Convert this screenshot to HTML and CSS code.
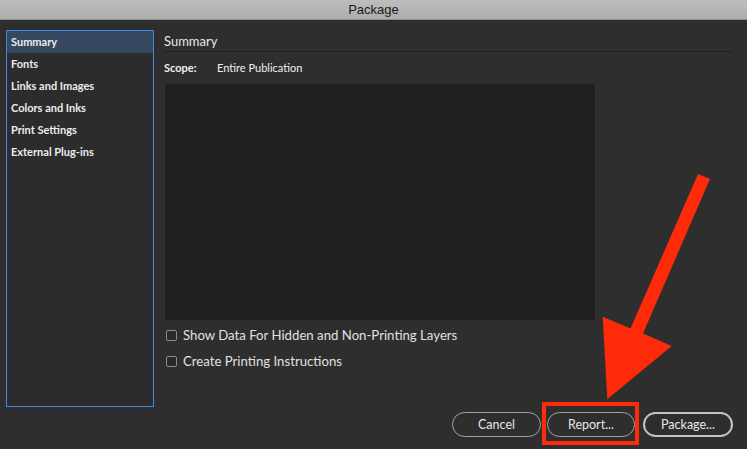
FILE: index.html
```html
<!DOCTYPE html>
<html lang="en">
<head>
<meta charset="utf-8">
<title>Package</title>
<link rel="stylesheet" href="styles.css">
</head>
<body>
<div class="window">
  <div class="titlebar">Package</div>
  <div class="main">
    <ul class="sidebar">
      <li class="item selected">Summary</li>
      <li class="item">Fonts</li>
      <li class="item">Links and Images</li>
      <li class="item">Colors and Inks</li>
      <li class="item">Print Settings</li>
      <li class="item">External Plug-ins</li>
    </ul>
    <section class="pane">
      <h1 class="pane-title">Summary</h1>
      <div class="scope"><span class="scope-label">Scope:</span><span>Entire Publication</span></div>
      <div class="info-box"></div>
      <label class="check"><span class="box"></span>Show Data For Hidden and Non-Printing Layers</label>
      <label class="check"><span class="box"></span>Create Printing Instructions</label>
    </section>
  </div>
  <div class="footer">
    <button class="btn btn-cancel">Cancel</button>
    <button class="btn btn-report">Report...</button>
    <button class="btn btn-default">Package...</button>
  </div>
  <svg class="annotation" width="747" height="449" viewBox="0 0 747 449">
    <polygon fill="#ff2a0a" points="698,174 710,179 643,333.5 671.7,346 607.3,399.3 602.7,316.7 630.5,328.5"/>
    <rect x="544" y="404" width="93" height="39" fill="none" stroke="#ff2a0a" stroke-width="4"/>
  </svg>
</div>
</body>
</html>
```
FILE: styles.css
```css
* { box-sizing: border-box; }
html, body { margin: 0; padding: 0; }
body {
  width: 747px;
  height: 449px;
  overflow: hidden;
  background: #2e2e2e;
  font-family: "Lato", "Open Sans", sans-serif;
  color: #e4e4e4;
}
.window {
  position: relative;
  width: 747px;
  height: 449px;
  display: flex;
  flex-direction: column;
}
.titlebar {
  height: 20px;
  background: linear-gradient(#bdbdbd, #adadad);
  border-bottom: 1px solid #8f8f8f;
  color: #1a1a1a;
  font-family: "Liberation Sans", sans-serif;
  font-size: 13px;
  line-height: 19px;
  text-align: center;
}
.main {
  display: flex;
  gap: 10px;
  padding: 10px 15px 0 6px;
  height: 387px;
}
.sidebar {
  list-style: none;
  margin: 0;
  padding: 0;
  width: 148px;
  height: 377px;
  border: 1px solid #3c8de0;
  background: #2c2c2c;
}
.item {
  height: 22px;
  line-height: 21px;
  padding-left: 4px;
  font-size: 11px;
  font-weight: 700;
  color: #ececec;
}
.item.selected {
  background: #34495f;
}
.pane {
  flex: 1;
  display: flex;
  flex-direction: column;
}
.pane-title {
  margin: 0;
  font-size: 13px;
  font-weight: 400;
  line-height: 20px;
  padding-top: 1px;
  height: 22px;
  border-bottom: 1px solid #212121;
  color: #e8e8e8;
}
.scope {
  display: flex;
  font-size: 11px;
  line-height: 14px;
  margin-top: 9px;
  color: #f0f0f0;
}
.scope-label {
  font-weight: 700;
  width: 53px;
}
.info-box {
  margin: 9px 0 0 1px;
  width: 430px;
  height: 236px;
  background: #212121;
}
.check {
  display: flex;
  align-items: center;
  gap: 6px;
  font-size: 13.2px;
  line-height: 16px;
  height: 16px;
  margin-left: 2px;
  color: #e0e0e0;
}
.check:first-of-type { margin-top: 7px; }
.check + .check { margin-top: 10px; }
.box {
  width: 11px;
  height: 11px;
  border: 1px solid #8c8c8c;
  border-radius: 2px;
  background: #292929;
}
.footer {
  display: flex;
  justify-content: flex-end;
  padding: 5px 14px 0 0;
  gap: 6px;
}
.btn {
  height: 25px;
  border: 1px solid #a3a3a3;
  border-radius: 13px;
  background: #2e2e2e;
  color: #e6e6e6;
  font-family: "Lato", "Open Sans", sans-serif;
  font-size: 12.5px;
  padding: 0;
}
.btn-cancel { width: 89px; }
.btn-report { width: 88px; }
.btn-default {
  width: 90px;
  margin-left: 2px;
  border: 2px solid #c4c4c4;
}
.annotation {
  position: absolute;
  left: 0;
  top: 0;
  pointer-events: none;
}
```
